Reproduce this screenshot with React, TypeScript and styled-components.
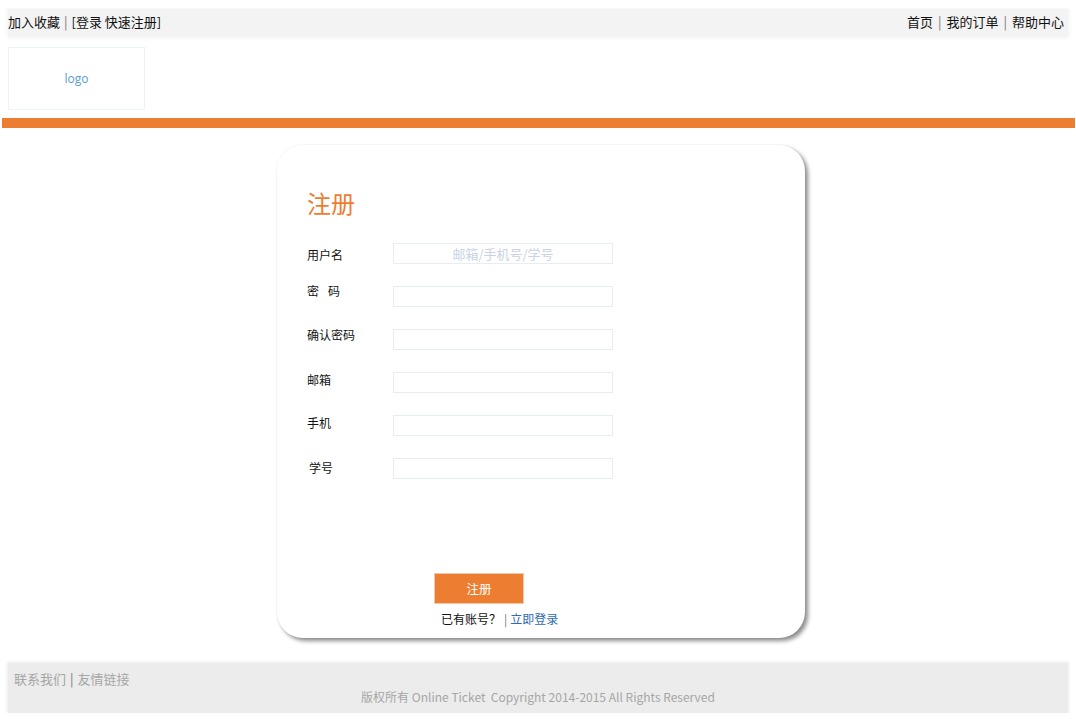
import styled, { createGlobalStyle } from 'styled-components'

const GlobalStyle = createGlobalStyle`
   body {
      margin: 8px 1px 8px 2px;
      background: #ffffff;
      font-family: "Open Sans", "Noto Sans CJK SC", sans-serif;
      color: #111;
   }
`

const Page = styled.div`
   width: 1073px;
   display: flex;
   flex-direction: column;
`

const Inset = styled.div`
   margin: 0 7px 0 6px;
   display: flex;
   flex-direction: column;
`

const TopBar = styled.div`
   height: 28px;
   margin-top: 1px;
   padding: 0 4px 3px 0;
   box-sizing: border-box;
   display: flex;
   justify-content: space-between;
   align-items: center;
   background: #f3f3f3;
   box-shadow: 0 0 4px 1px #f3f3f3;
   font-size: 13px;
   font-family: "Noto Sans CJK SC", sans-serif;
`

const Sep = styled.span<{ $wide?: number }>`
   color: #777;
   margin: 0 ${p => p.$wide ?? 3}px;
`

const LogoBox = styled.div`
   margin-top: 10px;
   width: 135px;
   height: 61px;
   border: 1px solid #edf1f8;
   display: flex;
   align-items: center;
   justify-content: center;
   color: #5b9bd5;
   font-size: 12px;
`

const OrangeBar = styled.div`
   margin-top: 8px;
   height: 10px;
   background: #ed7d31;
`

const Card = styled.div`
   margin: 17px 0 0 269px;
   width: 528px;
   height: 493px;
   box-sizing: border-box;
   padding: 42px 0 0 30px;
   border-radius: 26px;
   background: #fff;
   box-shadow: 3px 3px 4px rgba(0, 0, 0, 0.45), 0 0 3px rgba(0, 0, 0, 0.05);
   display: flex;
   flex-direction: column;
`

const Title = styled.h1`
   margin: 0;
   font-size: 24px;
   font-weight: normal;
   color: #ed7d31;
   font-family: "Noto Sans CJK SC", sans-serif;
   line-height: 32px;
`

const Form = styled.div`
   margin-top: 24px;
   display: grid;
   grid-template-columns: 86px 220px;
   grid-auto-rows: 43px;
`

const Label = styled.div<{ $shift: number; $indent?: number }>`
   font-size: 12px;
   line-height: 17px;
   font-family: "Noto Sans CJK SC", sans-serif;
   margin-top: ${p => p.$shift}px;
   padding-left: ${p => p.$indent || 0}px;
`

const Gap = styled.span`
   display: inline-block;
   width: 9px;
`

const Input = styled.input`
   box-sizing: border-box;
   width: 220px;
   height: 21px;
   border: 1px solid #e8ecf4;
   padding: 0;
   outline: none;
   text-align: center;
   font-size: 13px;
   font-family: "Noto Sans CJK SC", sans-serif;
   &::placeholder {
      color: #c9d3e6;
   }
`

const Actions = styled.div`
   margin-top: 72px;
   padding-left: 127px;
   display: flex;
   flex-direction: column;
   align-items: flex-start;
`

const SubmitButton = styled.button`
   width: 90px;
   height: 31px;
   border: 1px solid #f0c8aa;
   background: #ed7d31;
   color: #fff;
   font-size: 12.5px;
   font-family: "Noto Sans CJK SC", sans-serif;
   padding: 0;
`

const LoginLine = styled.div`
   margin: 6px 0 0 7px;
   font-size: 12px;
   font-family: "Noto Sans CJK SC", sans-serif;
   line-height: 18px;
`

const LoginLink = styled.a`
   color: #2f6bb3;
   text-decoration: none;
`

const Footer = styled.div`
   margin-top: 25px;
   height: 50px;
   box-sizing: border-box;
   padding: 7px 6px 0;
   background: #ececec;
   box-shadow: 0 0 3px 1px #ececec;
   color: #a6a6a6;
   font-size: 13px;
   font-family: "Noto Sans CJK SC", sans-serif;
   display: flex;
   flex-direction: column;
`

const FooterLinks = styled.div`
   line-height: 18px;
`

const Copyright = styled.div`
   margin-top: 0;
   text-align: center;
   font-size: 12px;
   line-height: 18px;
   font-family: "Noto Sans CJK SC", sans-serif;
`

const fields = [
   { label: '用户名', shift: 3, placeholder: '邮箱/手机号/学号' },
   { label: 'pwd', shift: -4 },
   { label: '确认密码', shift: -3 },
   { label: '邮箱', shift: -1 },
   { label: '手机', shift: -1 },
   { label: '学号', shift: 1, indent: 2 },
]

export default function App() {
   return (
      <Page>
         <GlobalStyle />
         <Inset>
            <TopBar>
               <span>加入收藏<Sep $wide={4}>|</Sep>[登录 快速注册]</span>
               <span>首页<Sep $wide={5}>|</Sep>我的订单<Sep $wide={5}>|</Sep>帮助中心</span>
            </TopBar>
            <LogoBox>logo</LogoBox>
         </Inset>
         <OrangeBar />
         <Inset>
            <Card>
               <Title>注册</Title>
               <Form>
                  {fields.map(f => (
                     <>
                        <Label key={f.label + 'l'} $shift={f.shift} $indent={f.indent}>
                           {f.label === 'pwd' ? <>密<Gap />码</> : f.label}
                        </Label>
                        <Input key={f.label + 'i'} placeholder={f.placeholder} />
                     </>
                  ))}
               </Form>
               <Actions>
                  <SubmitButton>注册</SubmitButton>
                  <LoginLine>
                     已有账号？<Sep>|</Sep><LoginLink href="#">立即登录</LoginLink>
                  </LoginLine>
               </Actions>
            </Card>
            <Footer>
               <FooterLinks>联系我们<Sep $wide={4}>|</Sep>友情链接</FooterLinks>
               <Copyright>版权所有 Online Ticket&nbsp; Copyright 2014-2015 All Rights Reserved</Copyright>
            </Footer>
         </Inset>
      </Page>
   )
}
